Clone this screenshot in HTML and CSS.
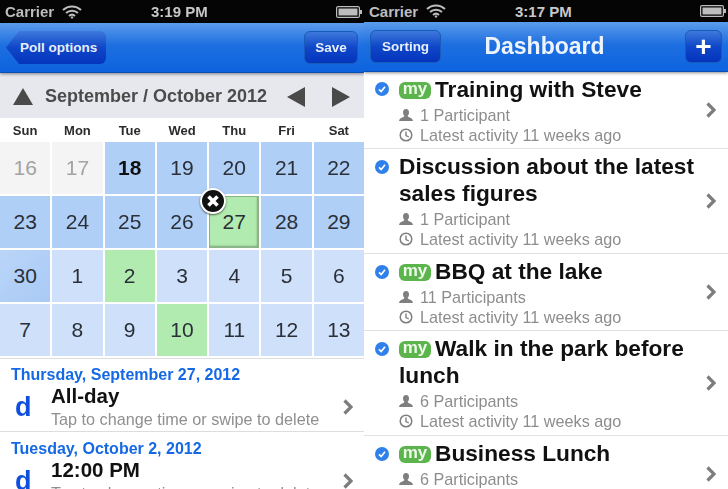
FILE: index.html
```html
<!DOCTYPE html>
<html lang="en">
<head>
  <meta charset="UTF-8">
  <title>Poll calendar and dashboard</title>
  <link rel="stylesheet" href="styles.css">
</head>
<body>
  <svg class="defs" width="0" height="0">
    <symbol id="i-wifi" viewBox="0 0 20 14">
      <path d="M1 5a13 13 0 0 1 18 0M4 8a9 9 0 0 1 12 0M7 11a4.500 4.500 0 0 1 6 0" fill="none" stroke="currentColor" stroke-width="2"/>
      <path d="M8.500 12.500L10 11l1.500 1.500L10 14z" fill="currentColor"/>
    </symbol>
    <symbol id="i-battery" viewBox="0 0 26 12">
      <rect x=".6" y=".6" width="22.800" height="10.800" rx="1.500" fill="none" stroke="currentColor" stroke-width="1.200"/>
      <rect x="2.500" y="2.500" width="19" height="7" fill="currentColor"/>
      <rect x="24" y="4" width="2" height="4" fill="currentColor"/>
    </symbol>
    <symbol id="i-chev" viewBox="0 0 10 16">
      <path d="M1.500 1.500L8 8l-6.500 6.500" fill="none" stroke="currentColor" stroke-width="3.200"/>
    </symbol>
    <symbol id="i-user" viewBox="0 0 14 12">
      <path d="M7 0c2 0 3 1.500 3 3.400 0 1.400-.7 2.600-1.300 3.200 0 1 .5 1.400 2 1.900 1.400.5 2.800 1 3.300 3.500H0c.5-2.500 1.900-3 3.300-3.500 1.500-.5 2-.9 2-1.900C4.700 6 4 4.800 4 3.400 4 1.500 5 0 7 0z" fill="currentColor"/>
    </symbol>
    <symbol id="i-clock" viewBox="0 0 14 14">
      <circle cx="7" cy="7" r="5.800" fill="none" stroke="currentColor" stroke-width="1.500"/>
      <path d="M7 3.500V7.500L9.800 9" fill="none" stroke="currentColor" stroke-width="1.400"/>
    </symbol>
    <symbol id="i-check" viewBox="0 0 14 14">
      <circle cx="7" cy="7" r="7" fill="#2f80ea"/>
      <path d="M4 7.300l2.200 2.200L10 4.800" fill="none" stroke="#fff" stroke-width="1.700"/>
    </symbol>
  </svg>

  <div class="phone phone-left">
    <div class="status">
      <span class="carrier">Carrier</span>
      <svg class="wifi"><use href="#i-wifi"/></svg>
      <span class="clock">3:19 PM</span>
      <svg class="battery"><use href="#i-battery"/></svg>
    </div>
    <div class="nav">
      <div class="btn-back"><span>Poll options</span></div>
      <div class="btn btn-save">Save</div>
    </div>
    <div class="toolbar">
      <span class="tri tri-up"></span>
      <span class="month">September / October 2012</span>
      <span class="tri tri-left"></span>
      <span class="tri tri-right"></span>
    </div>
    <div class="weekdays">
      <span>Sun</span><span>Mon</span><span>Tue</span><span>Wed</span><span>Thu</span><span>Fri</span><span>Sat</span>
    </div>
    <div class="calendar">
      <div class="day past">16</div><div class="day past">17</div><div class="day sep"><b>18</b></div><div class="day sep">19</div><div class="day sep">20</div><div class="day sep">21</div><div class="day sep">22</div>
      <div class="day sep">23</div><div class="day sep">24</div><div class="day sep">25</div><div class="day sep">26</div>
      <div class="day picked selected">27
        <span class="remove">
          <svg viewBox="0 0 14 14" width="14" height="14"><path d="M2.500 2.500l9 9M11.500 2.500l-9 9" stroke="#fff" stroke-width="3.600"/></svg>
        </span>
      </div>
      <div class="day sep">28</div><div class="day sep">29</div>
      <div class="day sep sep-end">30</div><div class="day oct">1</div><div class="day picked">2</div><div class="day oct">3</div><div class="day oct">4</div><div class="day oct">5</div><div class="day oct">6</div>
      <div class="day oct">7</div><div class="day oct">8</div><div class="day oct">9</div><div class="day picked">10</div><div class="day oct">11</div><div class="day oct">12</div><div class="day oct">13</div>
    </div>
    <div class="slots">
      <div class="slot slot-first">
        <div class="slot-date">Thursday, September 27, 2012</div>
        <div class="slot-body">
          <span class="slot-d">d</span>
          <div class="slot-text">
            <div class="slot-time">All-day</div>
            <div class="slot-hint">Tap to change time or swipe to delete</div>
          </div>
          <svg class="chev"><use href="#i-chev"/></svg>
        </div>
      </div>
      <div class="slot">
        <div class="slot-date">Tuesday, October 2, 2012</div>
        <div class="slot-body">
          <span class="slot-d">d</span>
          <div class="slot-text">
            <div class="slot-time">12:00 PM</div>
            <div class="slot-hint">Tap to change time or swipe to delete</div>
          </div>
          <svg class="chev"><use href="#i-chev"/></svg>
        </div>
      </div>
    </div>
  </div>

  <div class="phone phone-right">
    <div class="status">
      <span class="carrier">Carrier</span>
      <svg class="wifi"><use href="#i-wifi"/></svg>
      <span class="clock">3:17 PM</span>
      <svg class="battery"><use href="#i-battery"/></svg>
    </div>
    <div class="nav">
      <div class="btn btn-sort">Sorting</div>
      <div class="nav-title">Dashboard</div>
      <div class="btn btn-add">+</div>
    </div>
    <div class="polls">
      <div class="poll poll-1">
        <svg class="check"><use href="#i-check"/></svg>
        <div class="poll-main">
          <div class="poll-title"><span class="my">my</span>Training with Steve</div>
          <div class="meta meta-first"><svg class="meta-icon"><use href="#i-user"/></svg>1 Participant</div>
          <div class="meta"><svg class="meta-icon"><use href="#i-clock"/></svg>Latest activity 11 weeks ago</div>
        </div>
        <svg class="chev"><use href="#i-chev"/></svg>
      </div>
      <div class="poll poll-2">
        <svg class="check"><use href="#i-check"/></svg>
        <div class="poll-main">
          <div class="poll-title">Discussion about the latest sales figures</div>
          <div class="meta meta-first"><svg class="meta-icon"><use href="#i-user"/></svg>1 Participant</div>
          <div class="meta"><svg class="meta-icon"><use href="#i-clock"/></svg>Latest activity 11 weeks ago</div>
        </div>
        <svg class="chev"><use href="#i-chev"/></svg>
      </div>
      <div class="poll poll-1">
        <svg class="check"><use href="#i-check"/></svg>
        <div class="poll-main">
          <div class="poll-title"><span class="my">my</span>BBQ at the lake</div>
          <div class="meta meta-first"><svg class="meta-icon"><use href="#i-user"/></svg>11 Participants</div>
          <div class="meta"><svg class="meta-icon"><use href="#i-clock"/></svg>Latest activity 11 weeks ago</div>
        </div>
        <svg class="chev"><use href="#i-chev"/></svg>
      </div>
      <div class="poll poll-2">
        <svg class="check"><use href="#i-check"/></svg>
        <div class="poll-main">
          <div class="poll-title"><span class="my">my</span>Walk in the park before lunch</div>
          <div class="meta meta-first"><svg class="meta-icon"><use href="#i-user"/></svg>6 Participants</div>
          <div class="meta"><svg class="meta-icon"><use href="#i-clock"/></svg>Latest activity 11 weeks ago</div>
        </div>
        <svg class="chev"><use href="#i-chev"/></svg>
      </div>
      <div class="poll poll-1">
        <svg class="check"><use href="#i-check"/></svg>
        <div class="poll-main">
          <div class="poll-title"><span class="my">my</span>Business Lunch</div>
          <div class="meta meta-first"><svg class="meta-icon"><use href="#i-user"/></svg>6 Participants</div>
          <div class="meta"><svg class="meta-icon"><use href="#i-clock"/></svg>Latest activity 11 weeks ago</div>
        </div>
        <svg class="chev"><use href="#i-chev"/></svg>
      </div>
    </div>
  </div>
</body>
</html>
```

FILE: styles.css
```css
html, body { height: 100%; }
body { margin: 0; display: flex; width: 728px; height: 489px; overflow: hidden; background: #fff; font-family: "Liberation Sans", Arial, sans-serif; color: #111; filter: blur(.4px); }
.defs { position: absolute; }
.phone { width: 364px; height: 489px; overflow: hidden; flex: none; }

/* status bar */
.status { display: flex; align-items: center; height: 22px; padding: 0 2px 0 5px; background: #050505; color: #bdbdbd; font-size: 15px; font-weight: bold; }
.carrier { width: 57px; }
.wifi { width: 20px; height: 14px; }
.clock { margin-left: 69px; flex: 1; font-size: 15px; color: #c8c8c8; }
.battery { width: 26px; height: 12px; }
.phone-left .status { height: 23px; }

/* nav bar */
.nav { display: flex; align-items: center; justify-content: space-between; height: 50px; padding: 0 6px 0 5px; box-sizing: border-box; background: linear-gradient(#5b9cec, #1e6fe0 45%, #0d63df); border-bottom: 1px solid #0b4fb5; box-shadow: 0 1px 3px rgba(0, 0, 0, .45); position: relative; z-index: 1; }
.btn { display: flex; align-items: center; justify-content: center; height: 33px; border-radius: 6px; border: 1px solid #175cb8; background: linear-gradient(#3f79dc, #0f47c8 50%, #0534bd); color: #e6effb; font-size: 13.500px; font-weight: bold; box-sizing: border-box; }
.btn-save { width: 54px; }
.btn-sort { width: 71px; margin-left: 1px; }
.btn-add { width: 37px; font-size: 28px; color: #fff; }
.btn-back { display: flex; align-items: center; height: 33px; width: 100px; margin-left: 1px; padding-left: 14px; box-sizing: border-box; border-radius: 0 6px 6px 0; background: linear-gradient(#3f79dc, #0f47c8 50%, #0534bd); color: #e6effb; font-size: 13.500px; font-weight: bold; clip-path: polygon(0 50%, 13px 0, 100% 0, 100% 100%, 13px 100%); }
.nav-title { margin-right: 37px; color: #eef4fd; font-size: 23px; font-weight: bold; }

/* month toolbar */
.toolbar { display: flex; align-items: center; height: 45px; padding: 2px 0 0 13px; box-sizing: border-box; background: #e7e8ee; }
.month { margin-left: 12px; width: 242px; font-size: 18px; font-weight: bold; color: #4b4b4b; }
.tri { width: 0; height: 0; border-style: solid; border-color: transparent; }
.tri-up { border-width: 0 10px 17px; border-bottom-color: #4a4a4a; }
.tri-left { border-width: 10px 18px 10px 0; border-right-color: #4a4a4a; }
.tri-right { margin-left: 27px; border-width: 10px 0 10px 18px; border-left-color: #4a4a4a; }

/* calendar */
.weekdays { display: grid; grid-template-columns: repeat(7, 1fr); column-gap: 2px; height: 24px; align-items: center; font-size: 13px; font-weight: bold; text-align: center; color: #2b2b2b; }
.calendar { display: grid; grid-template-columns: repeat(7, 1fr); grid-auto-rows: 52px; gap: 2px; padding-bottom: 2px; border-bottom: 1px solid #ddd; }
.day { display: flex; align-items: center; justify-content: center; position: relative; font-size: 21px; color: #2a2f38; }
.day b { color: #111; }
.past { background: #f4f4f4; color: #a3a3a3; }
.sep { background: #b0cff7; }
.sep-end { background: linear-gradient(135deg, #bad5f8, #a9caf5); }
.oct { background: #cfe0fa; }
.picked { background: #b2ebaf; }
.selected { box-sizing: border-box; border: 1px solid #8bb488; box-shadow: inset -1px -1px 2px #7fa77c; }
.remove { display: flex; align-items: center; justify-content: center; position: absolute; left: -10px; top: -9px; width: 26px; height: 26px; box-sizing: border-box; border-radius: 50%; border: 2px solid #fff; background: #111; box-shadow: 0 1px 2px rgba(0, 0, 0, .6); }

/* date rows under the calendar */
.slot { height: 75px; padding: 8px 11px 0 11px; box-sizing: border-box; border-bottom: 1px solid #ddd; }
.slot-first { height: 73px; padding-top: 7px; }
.slot-date { font-size: 16px; font-weight: bold; color: #1569e4; }
.slot-body { display: flex; align-items: center; }
.slot-d { width: 40px; padding-left: 4px; box-sizing: border-box; font-size: 27px; font-weight: bold; color: #0e4fe0; }
.slot-text { flex: 1; }
.slot-time { font-size: 20.500px; font-weight: bold; line-height: 24px; color: #111; }
.slot-hint { font-size: 16.200px; line-height: 22px; color: #8f8f8f; white-space: nowrap; }
.chev { width: 10px; height: 16px; color: #7d7d7d; flex: none; }

/* dashboard list */
.poll { display: flex; align-items: center; padding: 0 12px 0 11px; box-sizing: border-box; border-bottom: 1px solid #e2e2e2; }
.poll-1 { height: 77px; }
.poll-2 { height: 105px; }
.check { width: 14px; height: 14px; flex: none; align-self: flex-start; margin-top: 11px; }
.polls .poll:first-child .check { margin-top: 10px; }
.poll-main { flex: 1; padding-left: 10px; }
.poll-title { font-size: 22.700px; font-weight: bold; line-height: 27px; color: #111; }
.my { display: inline-block; width: 32px; height: 17px; margin-right: 4px; border-radius: 6px; background: #5cb54c; color: #eef9ea; font-size: 17px; font-weight: bold; line-height: 14px; text-align: center; vertical-align: 3px; }
.meta { display: flex; align-items: center; font-size: 16.200px; line-height: 20px; color: #8d8d8d; }
.meta-first { margin-top: 2px; }
.meta-icon { width: 14px; height: 14px; margin-right: 7px; flex: none; color: #7f7f7f; }
```
